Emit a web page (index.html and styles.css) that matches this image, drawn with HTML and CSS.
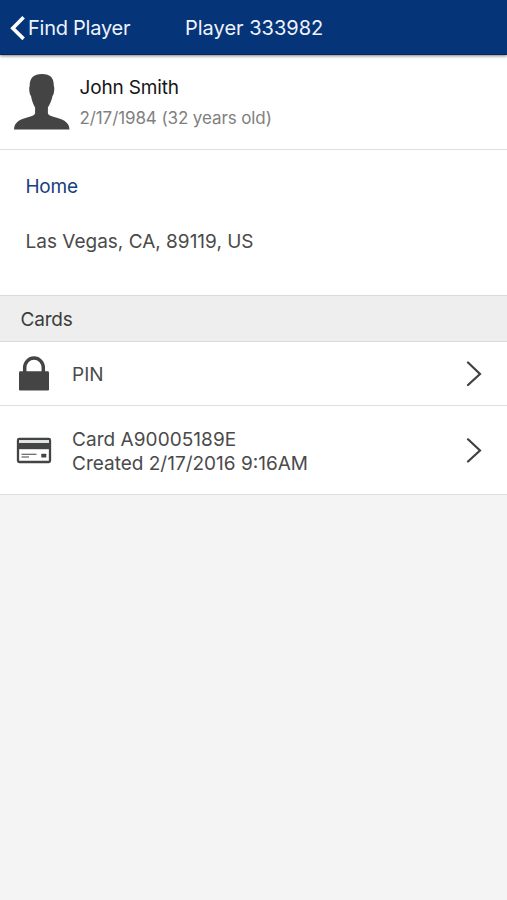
FILE: index.html
```html
<!DOCTYPE html>
<html lang="en">
<head>
<meta charset="utf-8">
<title>Player 333982</title>
<link rel="stylesheet" href="styles.css">
</head>
<body>
<header class="navbar">
  <a class="back"><svg class="back-icon" width="17" height="26" viewBox="0 0 17 26"><path d="M14.600 2.300 3.800 13.200l10.800 10.700" fill="none" stroke="currentColor" stroke-width="3.600"/></svg><span class="back-label">Find Player</span></a>
  <h1 class="title">Player 333982</h1>
</header>
<main>
  <section class="profile">
    <svg class="avatar" width="56" height="56" viewBox="0 0 56 56"><path d="M28 0C19.500 0 15.500 4 15.700 12c-.8 1.500-.6 4.500.1 7.500.3 1.300.7 2 1.200 2.600.8 4.500 2.200 8.500 4.100 11.500v5.500c0 1.500-1.500 2.500-4.600 3.500C7 45.300 .3 47.200 0 55.500h55.500c-.3-8.300-7.500-10.200-17-12.900-3.100-1-4.600-2-4.600-3.500v-5.500c1.900-3 3.800-7 4.600-11.500.5-.6.900-1.300 1.200-2.600.7-3 .9-6 .1-7.500C40 4 36.500 0 28 0Z" fill="currentColor"/></svg>
    <div class="person">
      <div class="name">John Smith</div>
      <div class="birth">2/17/1984 (32 years old)</div>
    </div>
  </section>
  <section class="address">
    <div class="address-label">Home</div>
    <div class="address-text">Las Vegas, CA, 89119, US</div>
  </section>
  <h2 class="section-head">Cards</h2>
  <div class="row row-pin">
    <svg class="row-icon" width="36" height="36" viewBox="0 0 36 36"><path d="M8.700 17v-5.200a9.300 9.800 0 0 1 18.600 0V17" fill="none" stroke="currentColor" stroke-width="3.500"/><rect x="3" y="15.300" width="30" height="19.200" rx="1.300" fill="currentColor"/></svg>
    <div class="row-text pin">PIN</div>
    <svg class="chevron" width="16" height="26" viewBox="0 0 16 26"><path d="m2 1.500 12 11.500-12 11" fill="none" stroke="currentColor" stroke-width="2.200" stroke-linecap="round"/></svg>
  </div>
  <div class="row row-card">
    <svg class="row-icon" width="36" height="36" viewBox="0 0 36 36"><rect x="2" y="7" width="32" height="23" rx="1.200" fill="#fff" stroke="currentColor" stroke-width="2.300"/><path d="M3.100 8.100h29.800v3H3.100z" fill="#e0e4e4"/><path d="M2 11h32v6.200H2z" fill="currentColor"/><path d="M5.500 22.200h15M5.500 25h7.500" stroke="currentColor" stroke-width="1.100"/><rect x="25.300" y="21.700" width="5" height="3.900" rx=".6" fill="currentColor"/></svg>
    <div class="row-text card-text"><div class="card-number">Card A90005189E</div><div class="card-date">Created 2/17/2016 9:16AM</div></div>
    <svg class="chevron" width="16" height="26" viewBox="0 0 16 26"><path d="m2 2.300 12 11.200L2 24.500" fill="none" stroke="currentColor" stroke-width="2.200" stroke-linecap="round"/></svg>
  </div>
</main>
</body>
</html>
```
FILE: styles.css
```css
* { box-sizing: border-box; }
body {
  margin: 0;
  min-height: 900px;
  background: #f4f4f4;
  color: #4a4a4a;
  font: 400 19px/24px Inter, "Liberation Sans", sans-serif;
  white-space: nowrap;
}
h1, h2 { margin: 0; font: inherit; }
.navbar {
  position: relative;
  display: grid;
  grid-template-columns: 185px 1fr;
  align-items: center;
  height: 55px;
  padding-top: 1px;
  background: #063478;
  border-bottom: 1px solid #052557;
  box-shadow: 0 1px 3px rgba(0, 0, 0, .5);
  color: #edf3fc;
  font-size: 20px;
}
.back { display: flex; align-items: center; padding-left: 9px; }
.back-icon { color: #fff; margin-right: 2px; }
.back-label { letter-spacing: -.25px; }
.title { letter-spacing: 0; }
.profile {
  display: flex;
  height: 95px;
  padding: 19px 14px 0;
  background: #fff;
  border-bottom: 1px solid #dedede;
}
.avatar { flex: none; margin-right: 9.500px; color: #444; }
.person { padding-top: 2px; }
.name { color: #151515; letter-spacing: -.15px; }
.birth { margin-top: 6px; color: #808080; font-size: 17px; letter-spacing: -.1px; }
.address { height: 145px; padding: 25px 25.500px; background: #fff; }
.address-label { color: #17407f; letter-spacing: -.25px; }
.address-text { margin-top: 31px; letter-spacing: 0; }
.section-head {
  height: 47px;
  padding-left: 20.500px;
  background: #eee;
  border: solid #dadada;
  border-width: 1px 0;
  color: #3c3c3c;
  letter-spacing: -.2px;
  line-height: 47px;
}
.row {
  display: grid;
  grid-template-columns: 56px 1fr 16px;
  align-items: center;
  padding: 0 25px 0 16px;
  background: #fff;
  border-bottom: 1px solid #dedede;
}
.row-pin { height: 64px; }
.row-card { height: 89px; }
.row-icon { color: #444; }
.pin { padding-top: 2px; }
.card-text { padding-top: 4px; line-height: 24px; }
.card-number { letter-spacing: .05px; }
.card-date { letter-spacing: 0; }
.chevron { color: #404040; }
```
